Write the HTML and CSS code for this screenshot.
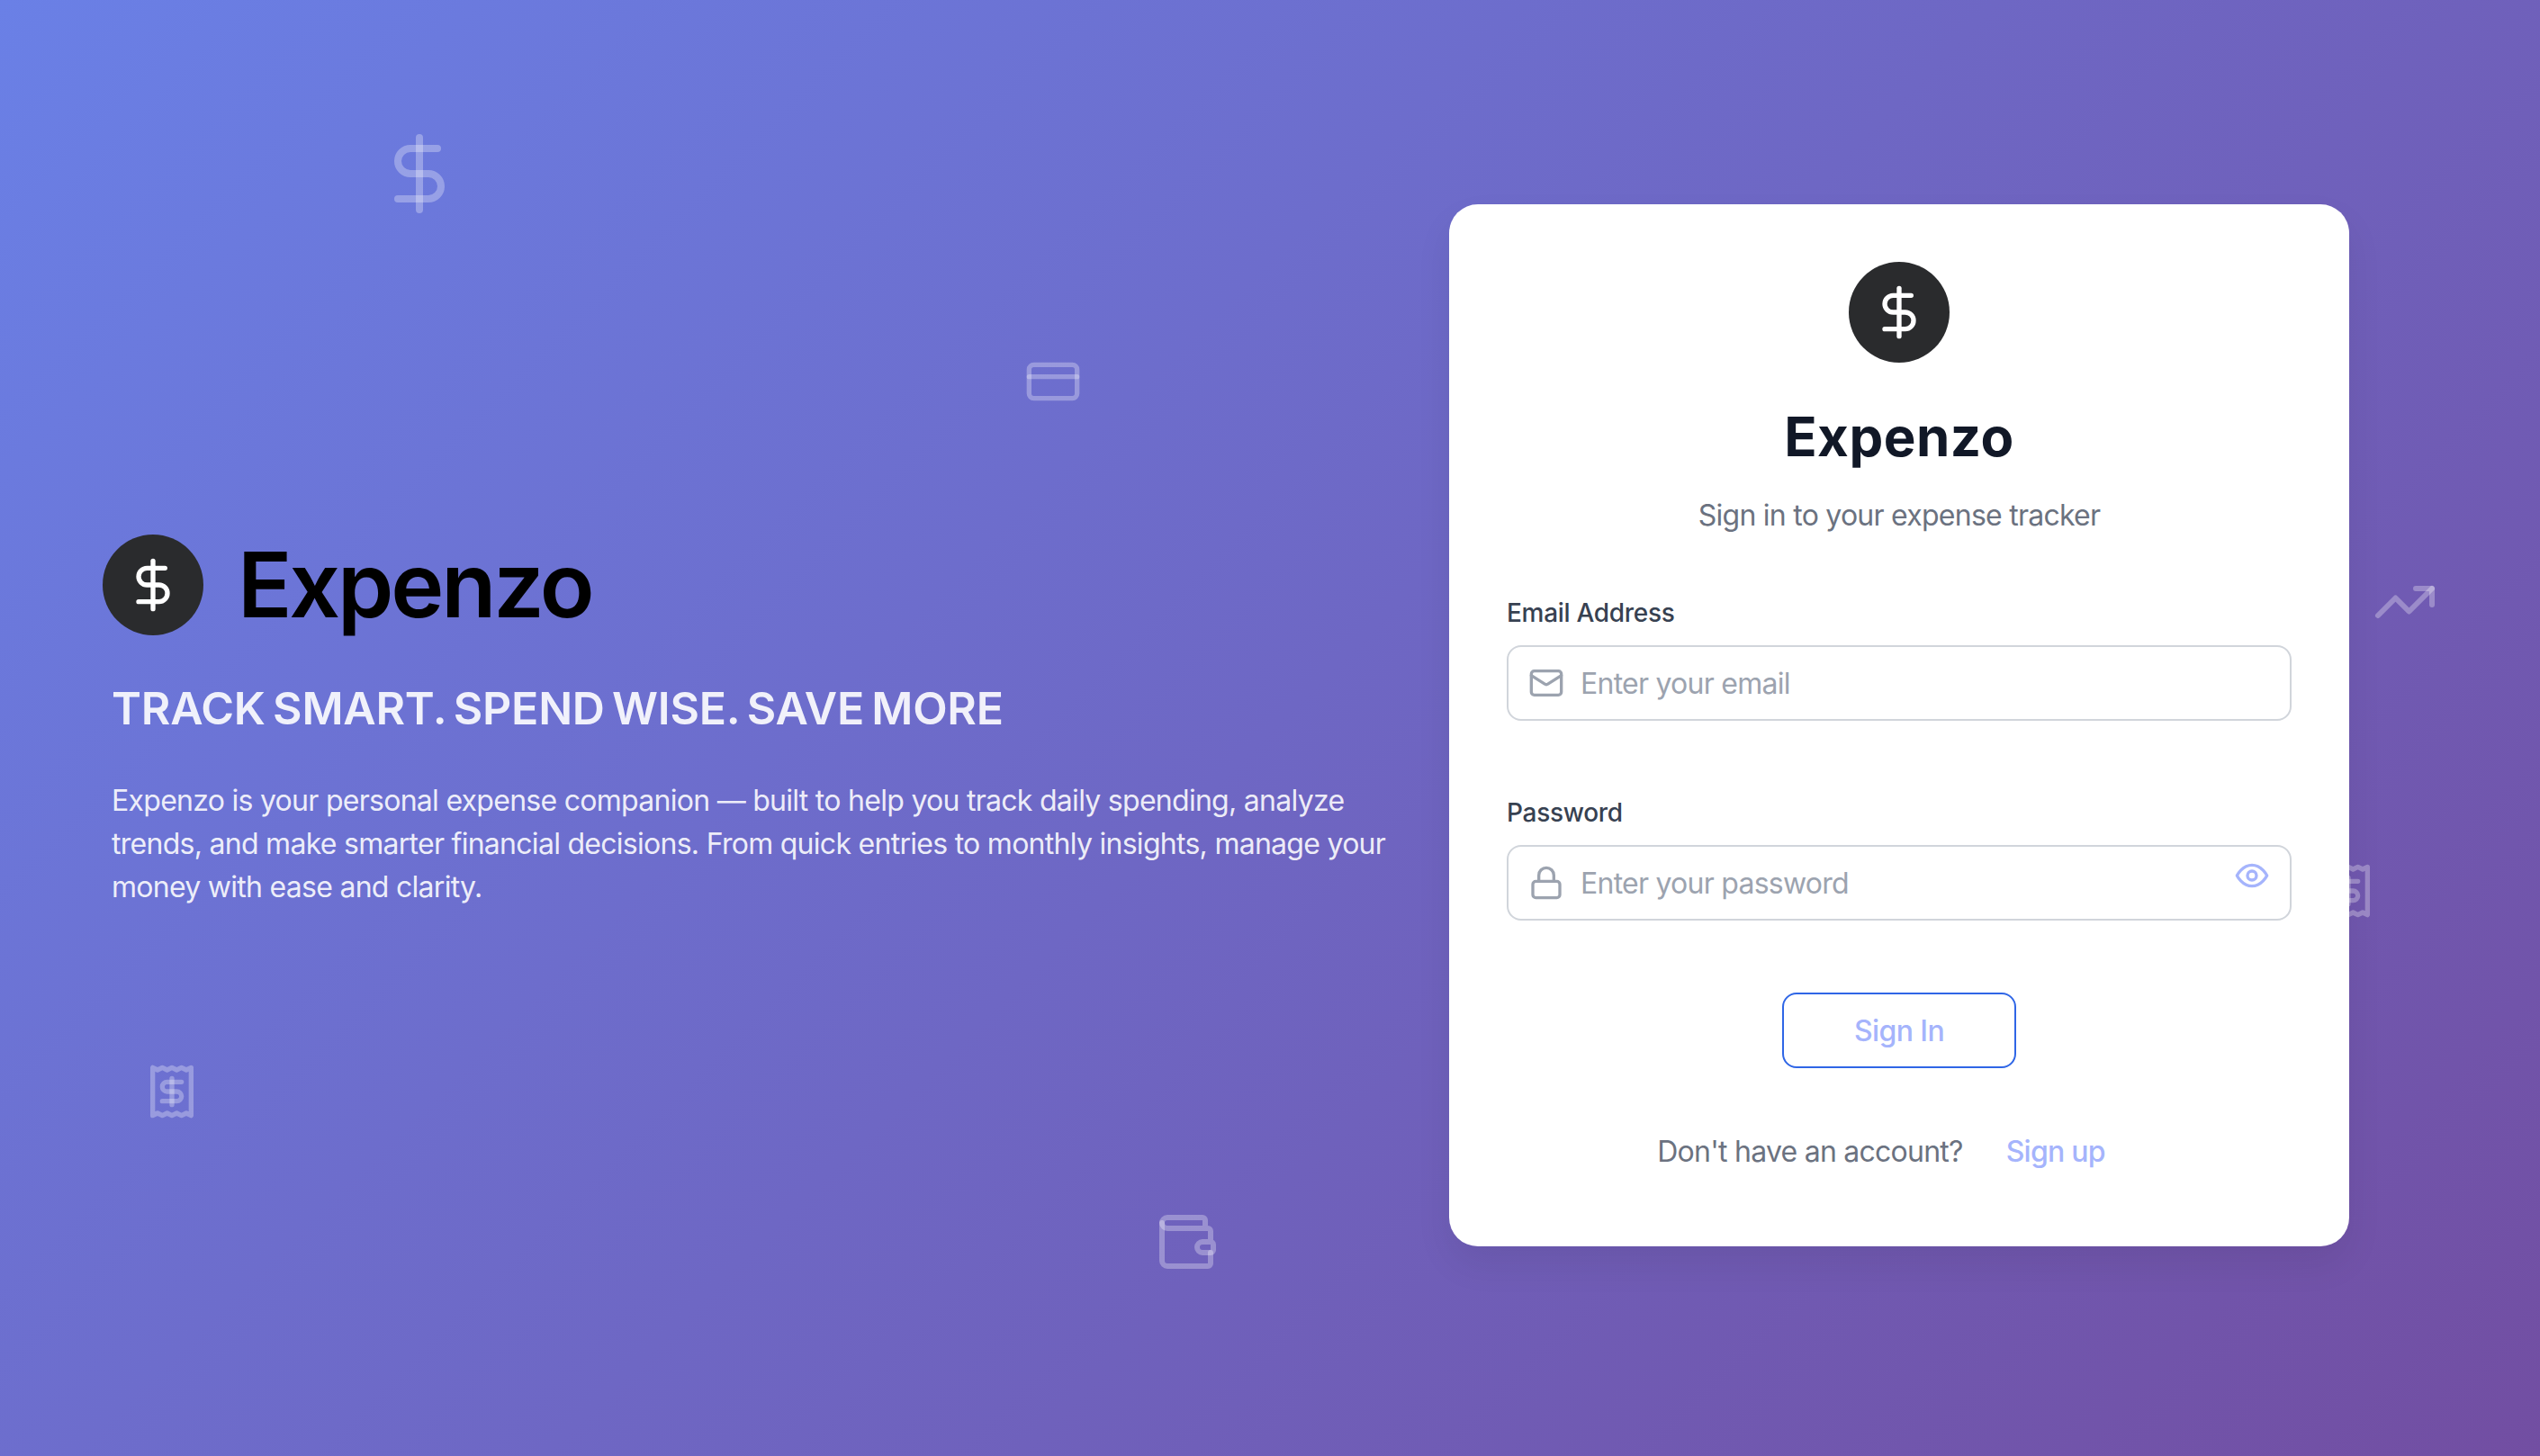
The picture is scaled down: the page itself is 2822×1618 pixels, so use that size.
FILE: index.html
```html
<!DOCTYPE html>
<html lang="en">
<head>
    <meta charset="UTF-8">
    <meta name="viewport" content="width=device-width, initial-scale=1.0">
    <title>Expenzo - Sign In</title>
    <link rel="stylesheet" href="styles.css">
</head>
<body>

<div class="page">

    <!-- background icons -->
    <svg class="float-icon float-dollar" viewBox="0 0 24 24"><line x1="12" y1="2" x2="12" y2="22"/><path d="M17 5H9.5a3.5 3.5 0 0 0 0 7h5a3.5 3.5 0 0 1 0 7H6"/></svg>
    <svg class="float-icon float-card" viewBox="0 0 24 24"><rect x="2" y="5" width="20" height="14" rx="2"/><line x1="2" y1="10" x2="22" y2="10"/></svg>
    <svg class="float-icon float-trend" viewBox="0 0 24 24"><polyline points="22 7 13.5 15.5 8.5 10.5 2 17"/><polyline points="16 7 22 7 22 13"/></svg>
    <svg class="float-icon float-receipt-a" viewBox="0 0 24 24"><path d="M4 2v20l2-1 2 1 2-1 2 1 2-1 2 1 2-1 2 1V2l-2 1-2-1-2 1-2-1-2 1-2-1-2 1Z"/><path d="M16 8h-6a2 2 0 1 0 0 4h4a2 2 0 1 1 0 4H8"/><path d="M12 17.5v-11"/></svg>
    <svg class="float-icon float-receipt-b" viewBox="0 0 24 24"><path d="M4 2v20l2-1 2 1 2-1 2 1 2-1 2 1 2-1 2 1V2l-2 1-2-1-2 1-2-1-2 1-2-1-2 1Z"/><path d="M16 8h-6a2 2 0 1 0 0 4h4a2 2 0 1 1 0 4H8"/><path d="M12 17.5v-11"/></svg>
    <svg class="float-icon float-wallet" viewBox="0 0 24 24"><path d="M19 7V4a1 1 0 0 0-1-1H5a2 2 0 0 0 0 4h15a1 1 0 0 1 1 1v4h-3a2 2 0 0 0 0 4h3a1 1 0 0 0 1-1v-2a1 1 0 0 0-1-1"/><path d="M3 5v14a2 2 0 0 0 2 2h15a1 1 0 0 0 1-1v-4"/></svg>

    <section class="hero">
        <div class="brand">
            <div class="logo">
                <svg class="logo-icon" viewBox="0 0 24 24"><line x1="12" y1="2" x2="12" y2="22"/><path d="M17 5H9.5a3.5 3.5 0 0 0 0 7h5a3.5 3.5 0 0 1 0 7H6"/></svg>
            </div>
            <span class="brand-name">Expenzo</span>
        </div>
        <h2 class="tagline">TRACK SMART. SPEND WISE. SAVE MORE</h2>
        <p class="intro">Expenzo is your personal expense companion — built to help you track daily spending, analyze trends, and make smarter financial decisions. From quick entries to monthly insights, manage your money with ease and clarity.</p>
    </section>

    <form class="card" onsubmit="return false">
        <div class="logo card-logo">
            <svg class="logo-icon" viewBox="0 0 24 24"><line x1="12" y1="2" x2="12" y2="22"/><path d="M17 5H9.5a3.5 3.5 0 0 0 0 7h5a3.5 3.5 0 0 1 0 7H6"/></svg>
        </div>
        <h1 class="card-title">Expenzo</h1>
        <p class="card-sub">Sign in to your expense tracker</p>

        <label class="field-label first" for="email">Email Address</label>
        <div class="field">
            <svg class="field-icon" viewBox="0 0 24 24"><rect x="2" y="4" width="20" height="16" rx="2"/><path d="m22 7-8.97 5.7a1.94 1.94 0 0 1-2.06 0L2 7"/></svg>
            <input class="field-input" id="email" type="email" placeholder="Enter your email">
        </div>

        <label class="field-label" for="password">Password</label>
        <div class="field">
            <svg class="field-icon" viewBox="0 0 24 24"><rect x="3" y="11" width="18" height="11" rx="2"/><path d="M7 11V7a5 5 0 0 1 10 0v4"/></svg>
            <input class="field-input" id="password" type="password" placeholder="Enter your password">
            <svg class="eye-icon" viewBox="0 0 24 24"><path d="M2 12s3.5-7 10-7 10 7 10 7-3.5 7-10 7-10-7-10-7Z"/><circle cx="12" cy="12" r="3"/></svg>
        </div>

        <button class="signin-btn" type="submit">Sign In</button>

        <p class="signup-row">
            <span>Don't have an account?</span>
            <a class="signup-link" href="#">Sign up</a>
        </p>
    </form>

</div>

</body>
</html>
```

FILE: styles.css
```css
* {
    box-sizing: border-box;
}

body {
    margin: 0;
    font-family: Inter, "Liberation Sans", sans-serif;
}

svg {
    fill: none;
    stroke-width: 2;
    stroke-linecap: round;
    stroke-linejoin: round;
}

.page {
    position: relative;
    display: flex;
    align-items: center;
    height: 100vh;
    overflow: hidden;
    padding: 0 212px 0 124px;
    background: linear-gradient(135deg, #6a80e6 0%, #724ea2 100%);
}

/* background icons */
.float-icon {
    position: absolute;
    stroke: rgba(255, 255, 255, 0.3);
}

.float-dollar {
    left: 418px;
    top: 145px;
    width: 96px;
    height: 96px;
}

.float-card {
    left: 1138px;
    top: 392px;
    width: 64px;
    height: 64px;
}

.float-trend {
    left: 2636px;
    top: 633px;
    width: 72px;
    height: 72px;
}

.float-receipt-a {
    left: 159px;
    top: 1181px;
    width: 64px;
    height: 64px;
}

.float-receipt-b {
    left: 2577px;
    top: 958px;
    width: 64px;
    height: 64px;
}

.float-wallet {
    left: 1282px;
    top: 1344px;
    width: 72px;
    height: 72px;
}

/* left side */
.hero {
    position: relative;
    flex: 1;
    padding-right: 60px;
    padding-bottom: 15px;
}

.brand {
    display: flex;
    align-items: center;
    gap: 38px;
    margin-left: -10px;
}

.logo {
    display: flex;
    align-items: center;
    justify-content: center;
    width: 112px;
    height: 112px;
    border-radius: 50%;
    background: #2a2b2d;
}

.logo-icon {
    width: 64px;
    height: 64px;
    stroke: #fff;
}

.brand-name {
    font-size: 100px;
    font-weight: 600;
    line-height: 112px;
    letter-spacing: -3.2px;
    color: #000;
}

.tagline {
    margin: 49px 0 0;
    font-size: 50px;
    font-weight: 600;
    line-height: 64px;
    letter-spacing: -0.25px;
    word-spacing: -4px;
    color: rgba(255, 255, 255, 0.9);
}

.intro {
    margin: 47px 0 0;
    font-size: 32px;
    line-height: 48px;
    letter-spacing: -0.72px;
    color: rgba(255, 255, 255, 0.9);
}

/* sign in card */
.card {
    position: relative;
    display: flex;
    flex-direction: column;
    flex: none;
    width: 1000px;
    margin-bottom: 6px;
    padding: 64px 64px 81px;
    border-radius: 32px;
    background: #fff;
    box-shadow: 0 20px 40px rgba(0, 0, 0, 0.07);
}

.card-logo {
    align-self: center;
}

.card-title {
    margin: 46px 0 0;
    font-size: 60px;
    font-weight: 700;
    line-height: 72px;
    letter-spacing: 0.5px;
    text-align: center;
    color: #111827;
}

.card-sub {
    margin: 28px 0 0;
    font-size: 32px;
    line-height: 48px;
    letter-spacing: -0.75px;
    text-align: center;
    color: #6b7280;
}

.field-label {
    display: block;
    margin-top: 82px;
    margin-bottom: 16px;
    font-size: 28px;
    font-weight: 500;
    line-height: 40px;
    letter-spacing: -0.3px;
    color: #374151;
}

.field-label.first {
    margin-top: 64px;
}

.field {
    display: flex;
    align-items: center;
    gap: 18px;
    height: 84px;
    padding: 0 22px;
    border: 2px solid #d1d5db;
    border-radius: 16px;
}

.field-icon {
    flex: none;
    width: 40px;
    height: 40px;
    stroke: #9ca3af;
}

.eye-icon {
    flex: none;
    align-self: flex-start;
    width: 40px;
    height: 40px;
    margin-top: 12px;
    stroke: #a5b4fc;
}

.field-input {
    flex: 1;
    min-width: 0;
    padding: 0;
    border: none;
    outline: none;
    background: transparent;
    font-family: inherit;
    font-size: 32px;
    letter-spacing: -0.75px;
    color: #111827;
}

.field-input::placeholder {
    color: #9ca3af;
    opacity: 1;
}

.signin-btn {
    align-self: center;
    width: 260px;
    height: 84px;
    margin-top: 80px;
    border: 2px solid #2f66e6;
    border-radius: 16px;
    background: #fff;
    font-family: inherit;
    font-size: 32px;
    font-weight: 500;
    letter-spacing: -0.6px;
    color: #a5b4fc;
    cursor: pointer;
}

.signup-row {
    display: flex;
    justify-content: center;
    gap: 48px;
    margin: 69px 0 0;
    padding-right: 40px;
    font-size: 32px;
    line-height: 48px;
    letter-spacing: -0.75px;
    color: #6b7280;
}

.signup-link {
    font-weight: 500;
    color: #a5b4fc;
    text-decoration: none;
}
```
